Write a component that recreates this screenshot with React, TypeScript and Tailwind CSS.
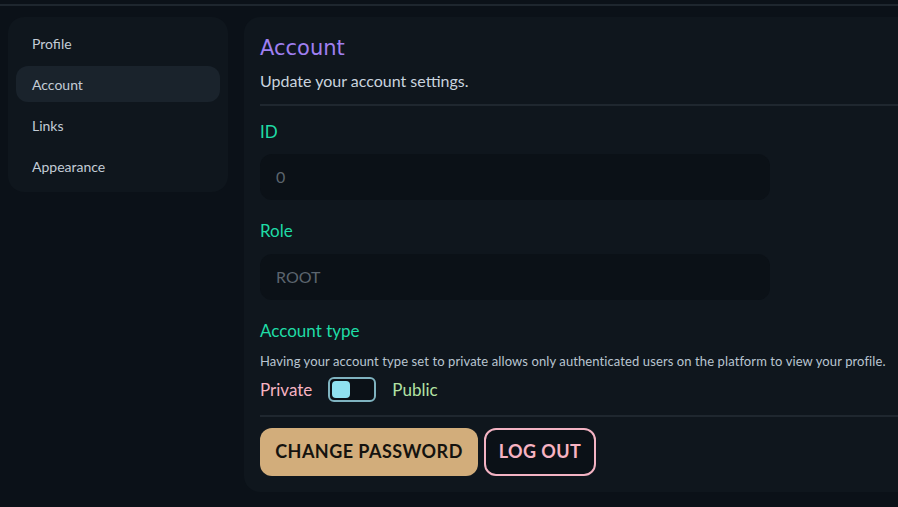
import { useState } from "react";

const NAV = ["Profile", "Account", "Links", "Appearance"];

export default function App() {
  const [isPublic, setIsPublic] = useState(false);

  return (
    <div
      className="h-[507px] w-[898px] overflow-hidden bg-[#0b1118] text-[#c9d4df]"
      style={{ fontFamily: "Lato, 'Noto Sans', sans-serif" }}
    >
      <div className="mt-[4px] h-[2px] w-full bg-[#1e262e]" />
      <div className="flex gap-4 px-2 pt-[11px]">
        {/* Sidebar */}
        <div className="flex h-[175px] w-[220px] shrink-0 flex-col gap-[5px] rounded-2xl bg-[#0f161d] p-2 pt-[8px]">
          {NAV.map((item) => (
            <div
              key={item}
              className={
                item === "Account"
                  ? "flex h-[36px] items-center rounded-xl bg-[#1a232c] px-4 text-[14px] text-[#c3ccd6]"
                  : "flex h-[36px] items-center rounded-xl px-4 text-[14px] text-[#c3ccd6]"
              }
            >
              {item}
            </div>
          ))}
        </div>

        {/* Main */}
        <div className="flex h-[475px] w-[720px] shrink-0 flex-col rounded-2xl bg-[#0f161d] pl-4 pt-[19px]">
          <h1
            className="text-[21px] font-medium leading-[24px] text-[#9f7ff0]"
            style={{ fontFamily: "'DejaVu Sans', sans-serif" }}
          >
            Account
          </h1>
          <p className="mt-[11px] text-[16px] leading-[20px] text-[#c9d4df]">Update your account settings.</p>
          <div className="mt-[13px] h-[2px] w-full bg-[#1f272f]" />

          <label className="mt-[15px] text-[17px] leading-[22px] text-[#1fdca6]">ID</label>
          <div className="mt-[11px] flex h-[46px] w-[510px] items-center rounded-xl bg-[#0b1117] px-4 text-[16px] text-[#5c656e]">
            0
          </div>

          <label className="mt-[20px] text-[17px] leading-[22px] text-[#1fdca6]">Role</label>
          <div className="mt-[12px] flex h-[46px] w-[510px] items-center rounded-xl bg-[#0b1117] px-4 text-[16px] text-[#5c656e]">
            ROOT
          </div>

          <label className="mt-[20px] text-[17px] leading-[22px] text-[#1fdca6]">Account type</label>
          <p className="mt-[10px] whitespace-nowrap text-[13px] leading-[18px] tracking-[0.1px] text-[#b9c5d1]">
            Having your account type set to private allows only authenticated users on the platform to view your profile.
          </p>
          <div className="mt-[7px] flex items-center gap-4">
            <span className="text-[17px] text-[#f7b3c2]">Private</span>
            <button
              onClick={() => setIsPublic(!isPublic)}
              className={
                isPublic
                  ? "flex h-[25px] w-[48px] items-center justify-end rounded-md border-2 border-[#7fb3c0] bg-[#0b1117] px-[2px]"
                  : "flex h-[25px] w-[48px] items-center justify-start rounded-md border-2 border-[#7fb3c0] bg-[#0b1117] px-[2px]"
              }
            >
              <span className="h-[17px] w-[18px] rounded-[4px] bg-[#8fe1ef]" />
            </button>
            <span className="text-[17px] text-[#b3e2a3]">Public</span>
          </div>
          <div className="mt-[12px] h-[2px] w-full bg-[#1f272f]" />

          <div className="mt-[11px] flex gap-[6px]">
            <button className="h-[48px] w-[218px] rounded-xl bg-[#d2ad7b] text-[18px] font-bold tracking-wide text-[#15130f]">
              CHANGE PASSWORD
            </button>
            <button className="h-[48px] w-[112px] rounded-xl border-2 border-[#f3b3c3] bg-[#0b1117] text-[18px] font-bold tracking-wide text-[#f7b3c2]">
              LOG OUT
            </button>
          </div>
        </div>
      </div>
    </div>
  );
}
